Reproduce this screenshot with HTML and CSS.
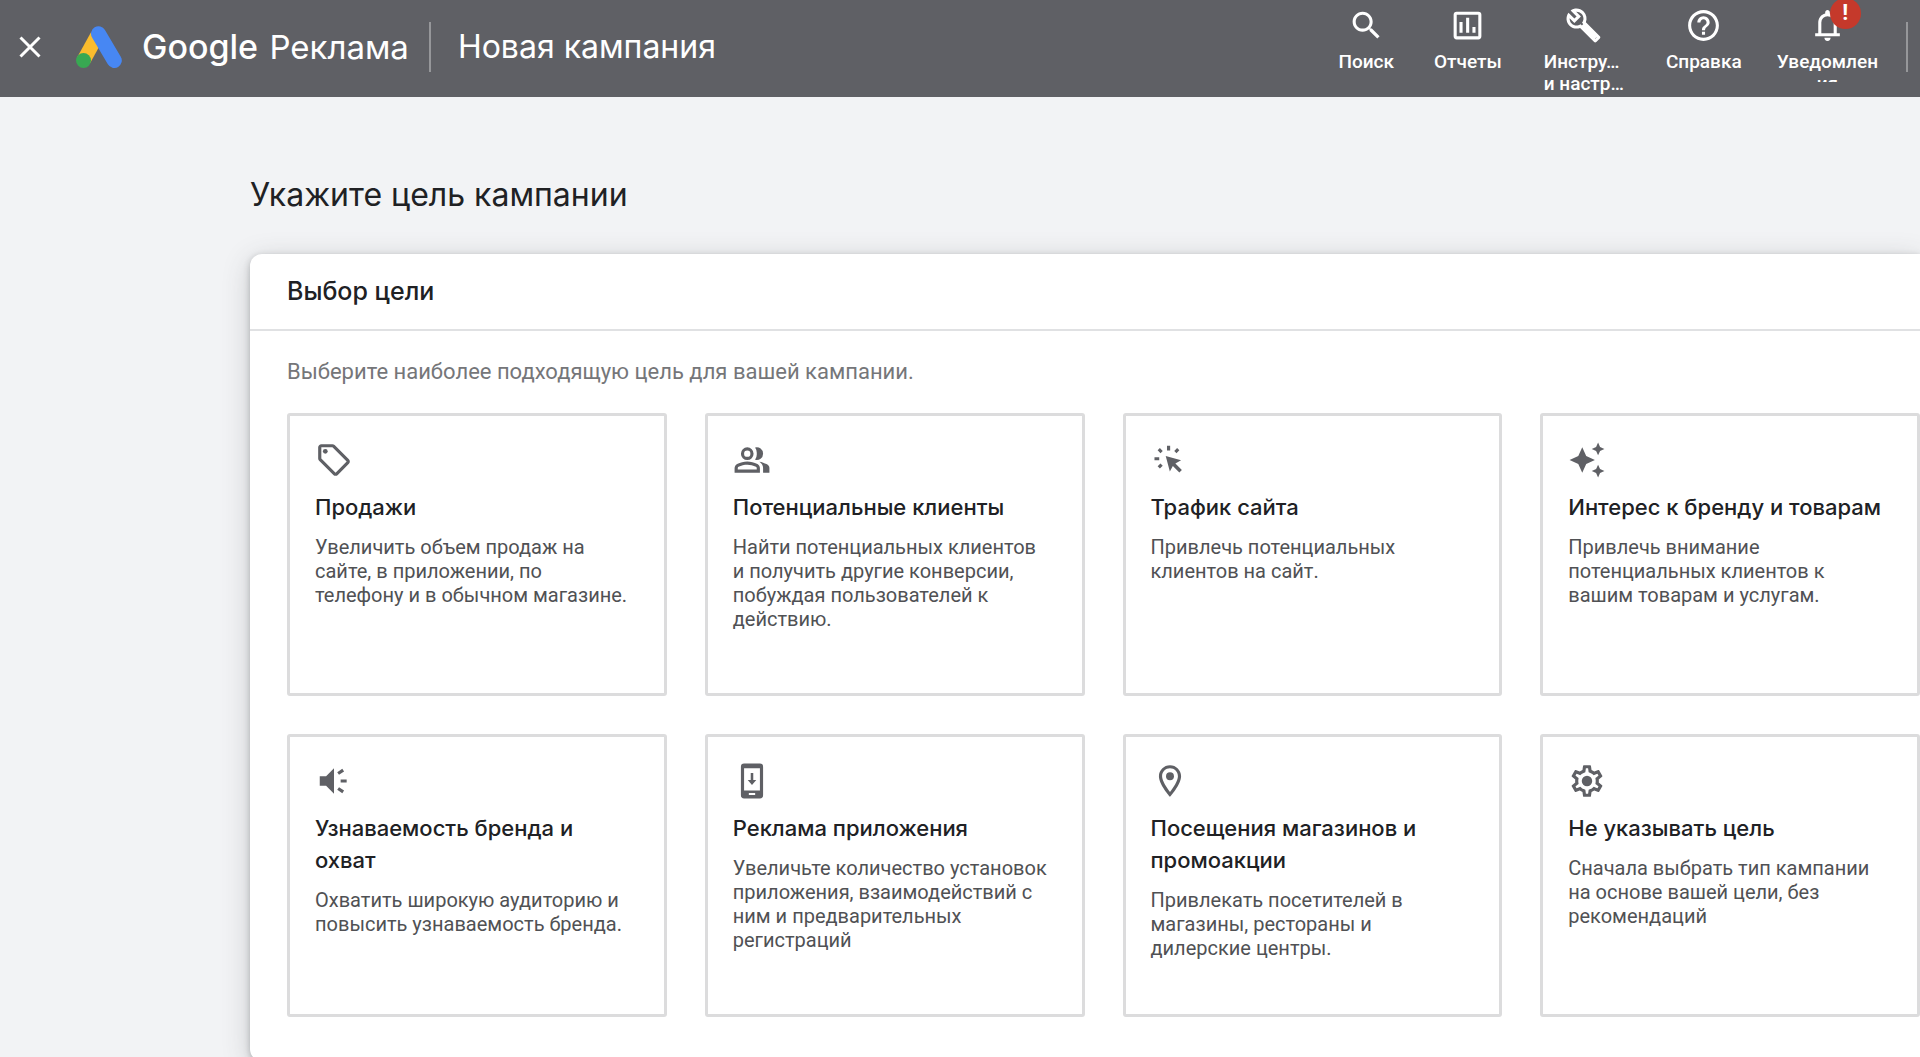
FILE: index.html
```html
<!DOCTYPE html>
<html lang="ru">
<head>
<meta charset="utf-8">
<meta name="viewport" content="width=device-width, initial-scale=1">
<title>Новая кампания – Google Реклама</title>
<link rel="stylesheet" href="styles.css">
</head>
<body>
<header class="topbar">
  <button class="close" type="button" aria-label="Закрыть">
    <svg viewBox="0 0 22 22" width="22" height="22"><path d="M1.5 1.5l19 19M20.5 1.5l-19 19" fill="none" stroke="currentColor" stroke-width="3"/></svg>
  </button>
  <a class="brand" href="#">
    <svg class="logo" viewBox="0 0 46 42" width="46" height="42" aria-hidden="true">
      <path d="M7.500 34.500L21 10" stroke="#fbbc2d" stroke-width="14"/>
      <path d="M22.500 7.800L38.300 34.500" stroke="#4787f3" stroke-width="15" stroke-linecap="round"/>
      <circle cx="7.500" cy="34.500" r="7.500" fill="#38a852"/>
    </svg>
    <span class="brand-name"><span class="brand-google">Google</span> Реклама</span>
  </a>
  <span class="divider"></span>
  <span class="page-name">Новая кампания</span>
  <nav class="tools">
    <button class="tool" type="button">
      <svg class="tool-icon" viewBox="0 0 24 24"><path d="M15.500 14h-.79l-.28-.27C15.410 12.590 16 11.110 16 9.500 16 5.910 13.090 3 9.500 3S3 5.910 3 9.500 5.910 16 9.500 16c1.610 0 3.090-.59 4.230-1.570l.27.28v.79l5 4.990L20.490 19l-4.990-5zm-6 0C7.010 14 5 11.990 5 9.500S7.010 5 9.500 5 14 7.010 14 9.500 11.990 14 9.500 14z"/></svg>
      <span class="tool-label">Поиск</span>
    </button>
    <button class="tool" type="button">
      <svg class="tool-icon" viewBox="0 0 24 24"><path fill-rule="evenodd" d="M5 3h14a2 2 0 0 1 2 2v14a2 2 0 0 1-2 2H5a2 2 0 0 1-2-2V5a2 2 0 0 1 2-2zm0 2v14h14V5z"/><path d="M6.800 9.700h2v7h-2zM11.100 7h2v9.700h-2zM15.200 13h2v3.700h-2z"/></svg>
      <span class="tool-label">Отчеты</span>
    </button>
    <button class="tool tool-wide" type="button">
      <svg class="tool-icon" viewBox="0 0 24 24"><path d="M22.610 18.990l-9.080-9.080c.93-2.340.45-5.100-1.440-7C9.790.61 6.210.4 3.660 2.260L7.500 6.110 6.080 7.520 2.250 3.690C.39 6.230.6 9.820 2.900 12.110c1.860 1.860 4.570 2.350 6.890 1.480l9.110 9.110c.39.39 1.020.39 1.410 0l2.300-2.300c.4-.38.4-1.010 0-1.410zm-3 1.600l-9.460-9.460c-.61.45-1.290.72-2 .82-1.360.2-2.790-.21-3.830-1.250C3.370 9.760 2.930 8.500 3 7.260l3.090 3.090 4.240-4.240-3.090-3.090c1.240-.07 2.490.37 3.440 1.310 1.080 1.080 1.490 2.570 1.240 3.960-.12.71-.42 1.370-.88 1.960l9.450 9.450-.88.89z"/><path d="M11.500 11.500L20 20" stroke="currentColor" stroke-width="3"/></svg>
      <span class="tool-label tool-label-start">Инстру…<br>и настр…</span>
    </button>
    <button class="tool" type="button">
      <svg class="tool-icon" viewBox="0 0 24 24"><path d="M11 18h2v-2h-2v2zm1-16C6.480 2 2 6.480 2 12s4.480 10 10 10 10-4.480 10-10S17.520 2 12 2zm0 18c-4.410 0-8-3.590-8-8s3.590-8 8-8 8 3.590 8 8-3.590 8-8 8zm0-14c-2.210 0-4 1.790-4 4h2c0-1.100.9-2 2-2s2 .9 2 2c0 2-3 1.750-3 5h2c0-2.250 3-2.500 3-5 0-2.210-1.790-4-4-4z"/></svg>
      <span class="tool-label">Справка</span>
    </button>
    <button class="tool tool-alerts" type="button">
      <span class="bell">
        <svg class="tool-icon" viewBox="0 0 24 24"><path fill-rule="evenodd" d="M4 19v-2h2v-7c0-1.380.42-2.610 1.250-3.690S9.170 4.530 10.500 4.200v-.7c0-.42.15-.77.44-1.060S11.580 2 12 2s.77.15 1.060.44.44.65.44 1.060v.7c1.330.33 2.420 1.030 3.250 2.110S18 8.620 18 10v7h2v2zm8 3a2 2 0 0 1-2-2h4a2 2 0 0 1-2 2zM8 17h8v-7a4 4 0 0 0-8 0z"/></svg>
        <span class="badge">!</span>
      </span>
      <span class="tool-label tool-label-clip">Уведомлен<br>ия</span>
    </button>
  </nav>
  <span class="divider"></span>
</header>

<main class="content">
  <h1 class="title">Укажите цель кампании</h1>
  <section class="panel">
    <h2 class="panel-title">Выбор цели</h2>
    <div class="panel-body">
      <p class="hint">Выберите наиболее подходящую цель для вашей кампании.</p>
      <div class="goals">
        <button class="goal" type="button">
          <svg class="goal-icon" viewBox="0 0 24 24"><path d="M21.410 11.580l-9-9C12.050 2.220 11.550 2 11 2H4c-1.100 0-2 .9-2 2v7c0 .55.22 1.050.59 1.420l9 9c.36.36.86.58 1.410.58s1.050-.22 1.410-.59l7-7c.37-.36.59-.86.59-1.410s-.23-1.060-.59-1.420zM13 20.010L4 11V4h7v-.01l9 9-7 7.020z"/><circle cx="6.500" cy="6.500" r="1.500"/></svg>
          <span class="goal-name">Продажи</span>
          <span class="goal-text">Увеличить объем продаж на сайте, в приложении, по телефону и в обычном магазине.</span>
        </button>
        <button class="goal" type="button">
          <svg class="goal-icon" viewBox="0 0 24 24"><path fill-rule="evenodd" d="M1 20v-2.800c0-.57.15-1.090.44-1.560A2.900 2.900 0 0 1 2.600 14.550a14.760 14.760 0 0 1 3.150-1.160A13.760 13.760 0 0 1 9 13c1.100 0 2.180.13 3.250.39 1.070.26 2.120.64 3.150 1.160.48.25.87.61 1.160 1.090.29.47.44.99.44 1.560V20zm2-2h12v-.8c0-.4-.2-.7-.5-.9A12 12 0 0 0 11.800 15.300 11.600 11.600 0 0 0 9 15c-.93 0-1.870.1-2.800.3-1 .3-1.800.5-2.700 1-.3.2-.5.5-.5.9zM19 20v-3c0-.73-.2-1.440-.61-2.110A5.700 5.700 0 0 0 16.650 13.150c.85.1 1.650.27 2.400.51.75.24 1.450.54 2.100.89.6.33 1.060.7 1.370 1.110.32.41.48.86.48 1.340V20zM9 12a4 4 0 1 1 0-8 4 4 0 0 1 0 8zm0-2a2 2 0 1 0 0-4 2 2 0 0 0 0 4zM19 8a4 4 0 0 1-5.050 3.880A6 6 0 0 0 15 8a6 6 0 0 0-1.050-3.880A4 4 0 0 1 19 8z"/></svg>
          <span class="goal-name">Потенциальные клиенты</span>
          <span class="goal-text">Найти потенциальных клиентов и получить другие конверсии, побуждая пользователей к действию.</span>
        </button>
        <button class="goal" type="button">
          <svg class="goal-icon" viewBox="0 0 24 24"><path d="M9.300 9.400l9.700 2.700-3.600 2.100 4.100 4.100-1.600 1.600-4.100-4.100-1.900 3.400z"/><path d="M11.100 3v3M4.900 5.200l1.800 1.800M17.200 5.200l-1.800 1.800M2.200 11.200h3M4.900 16.700l1.800-1.800" fill="none" stroke="currentColor" stroke-width="2"/></svg>
          <span class="goal-name">Трафик сайта</span>
          <span class="goal-text">Привлечь потенциальных клиентов на сайт.</span>
        </button>
        <button class="goal" type="button">
          <svg class="goal-icon" viewBox="0 0 24 24"><path d="M19 9l1.250-2.750L23 5l-2.750-1.250L19 1l-1.250 2.750L15 5l2.750 1.250L19 9zm-7.500.5L9 4 6.500 9.500 1 12l5.500 2.500L9 20l2.500-5.500L17 12l-5.500-2.500zM19 15l-1.250 2.750L15 19l2.750 1.250L19 23l1.250-2.750L23 19l-2.750-1.250L19 15z"/></svg>
          <span class="goal-name">Интерес к бренду и товарам</span>
          <span class="goal-text">Привлечь внимание потенциальных клиентов к вашим товарам и услугам.</span>
        </button>
        <button class="goal" type="button">
          <svg class="goal-icon" viewBox="0 0 24 24"><path d="M3 9v6h4l5 5V4L7 9z"/><path d="M14.600 7.300l3.200-2.200M16.200 12H20M14.600 16.700l3.200 2.200" fill="none" stroke="currentColor" stroke-width="2"/></svg>
          <span class="goal-name">Узнаваемость бренда и охват</span>
          <span class="goal-text">Охватить широкую аудиторию и повысить узнаваемость бренда.</span>
        </button>
        <button class="goal" type="button">
          <svg class="goal-icon" viewBox="0 0 24 24"><path fill-rule="evenodd" d="M7 1h10a2 2 0 0 1 2 2v18a2 2 0 0 1-2 2H7a2 2 0 0 1-2-2V3a2 2 0 0 1 2-2zm0 3v14h10V4zm3 15.500v1.300h4v-1.300z"/><path d="M11.200 7h1.600v4.400h1.900L12 14.600l-2.700-3.200h1.900z"/></svg>
          <span class="goal-name">Реклама приложения</span>
          <span class="goal-text">Увеличьте количество установок приложения, взаимодействий с ним и предварительных регистраций</span>
        </button>
        <button class="goal" type="button">
          <svg class="goal-icon" viewBox="0 0 24 24"><path d="M12 2C8.130 2 5 5.130 5 9c0 5.250 7 13 7 13s7-7.750 7-13c0-3.870-3.130-7-7-7zM7 9c0-2.760 2.240-5 5-5s5 2.240 5 5c0 2.880-2.880 7.190-5 9.880C9.920 16.210 7 11.850 7 9z"/><circle cx="12" cy="9" r="2.500"/></svg>
          <span class="goal-name">Посещения магазинов и промоакции</span>
          <span class="goal-text">Привлекать посетителей в магазины, рестораны и дилерские центры.</span>
        </button>
        <button class="goal" type="button">
          <svg class="goal-icon" viewBox="0 0 24 24"><path d="M19.430 12.980c.04-.32.07-.64.07-.98 0-.34-.03-.66-.07-.98l2.110-1.650c.19-.15.24-.42.12-.64l-2-3.460c-.09-.16-.26-.25-.44-.25-.06 0-.12.01-.17.03l-2.490 1c-.52-.4-1.080-.73-1.690-.98l-.38-2.650C14.460 2.180 14.250 2 14 2h-4c-.25 0-.46.18-.49.42l-.38 2.650c-.61.25-1.170.59-1.690.98l-2.490-1c-.06-.02-.12-.03-.18-.03-.17 0-.34.09-.43.25l-2 3.460c-.13.22-.07.49.12.64l2.110 1.650c-.04.32-.07.65-.07.98 0 .33.03.66.07.98l-2.110 1.650c-.19.15-.24.42-.12.64l2 3.460c.09.16.26.25.44.25.06 0 .12-.01.17-.03l2.490-1c.52.4 1.080.73 1.690.98l.38 2.650c.03.24.24.42.49.42h4c.25 0 .46-.18.49-.42l.38-2.650c.61-.25 1.170-.59 1.690-.98l2.490 1c.06.02.12.03.18.03.17 0 .34-.09.43-.25l2-3.460c.12-.22.07-.49-.12-.64l-2.110-1.650zm-1.980-1.710c.04.31.05.52.05.73 0 .21-.02.43-.05.73l-.14 1.130.89.7 1.080.84-.7 1.210-1.270-.51-1.040-.42-.9.68c-.43.32-.84.56-1.250.73l-1.060.43-.16 1.130-.2 1.350h-1.400l-.19-1.350-.16-1.130-1.060-.43c-.43-.18-.83-.41-1.230-.71l-.91-.7-1.060.43-1.270.51-.7-1.210 1.080-.84.89-.7-.14-1.130c-.03-.31-.05-.54-.05-.74s.02-.43.05-.73l.14-1.130-.89-.7-1.080-.84.7-1.210 1.270.51 1.040.42.9-.68c.43-.32.84-.56 1.250-.73l1.060-.43.16-1.130.2-1.350h1.390l.19 1.350.16 1.130 1.060.43c.43.18.83.41 1.230.71l.91.7 1.060-.43 1.270-.51.7 1.210-1.070.85-.89.7.14 1.130z"/><circle cx="12" cy="12" r="3.300"/></svg>
          <span class="goal-name">Не указывать цель</span>
          <span class="goal-text">Сначала выбрать тип кампании на основе вашей цели, без рекомендаций</span>
        </button>
      </div>
    </div>
  </section>
</main>
</body>
</html>
```
FILE: styles.css
```css
:root {
  --display: Inter, "Open Sans", sans-serif;
  --text: Roboto, "Liberation Sans", sans-serif;
  --grey: #5f6065;
  --ink: #202124;
}

* { box-sizing: border-box; }

body {
  margin: 0;
  background: #f2f3f5;
  color: var(--ink);
  font-family: var(--text);
}

button {
  margin: 0;
  border: 0;
  background: none;
  color: inherit;
  font: inherit;
  cursor: pointer;
}

svg { flex: none; fill: currentColor; }

/* Top bar */
.topbar {
  display: flex;
  align-items: center;
  height: 97px;
  padding: 0 12px 3px 19px;
  background: var(--grey);
  color: #fff;
}

.close { display: flex; padding: 0; }

.brand {
  display: flex;
  align-items: center;
  gap: 20px;
  margin: 0 20px 0 35px;
  color: inherit;
  text-decoration: none;
}

.logo { fill: none; }

.brand-name,
.page-name {
  font-family: var(--display);
  font-size: 32px;
  line-height: 40px;
  white-space: nowrap;
}

.brand-name { font-size: 33px; }

.brand-google { margin-right: 2px; font-size: 34px; font-weight: 500; }

.page-name { margin-left: 27px; }

.divider {
  flex: none;
  width: 2px;
  height: 50px;
  background: #96979a;
}

.tools {
  display: flex;
  align-self: flex-start;
  margin-left: auto;
  padding-right: 13px;
}

.tool {
  display: flex;
  flex-direction: column;
  align-items: center;
  gap: 7px;
  padding: 7px 20px 0;
}

.tool-wide { padding-inline: 22px; }
.tool-alerts { padding-inline: 15px; }

.tool-icon { display: block; width: 37px; height: 37px; }

.tool-label {
  font-size: 19px;
  font-weight: 500;
  line-height: 22px;
  white-space: nowrap;
}

.tool-label-start { text-align: left; }

.tool-label-clip { height: 31px; overflow: hidden; }

.bell { position: relative; }

.badge {
  position: absolute;
  left: 21px;
  bottom: 15px;
  width: 31px;
  height: 31px;
  border-radius: 50%;
  background: #c5392b;
  font-size: 22px;
  font-weight: 700;
  line-height: 30px;
  text-align: center;
}

/* Page */
.content { padding: 78px 0 0 250px; }

.title {
  margin: 0 0 39px;
  font-family: var(--display);
  font-size: 32px;
  font-weight: 400;
  line-height: 40px;
}

.panel {
  border-radius: 12px 0 0 12px;
  background: #fff;
  box-shadow: 0 6px 28px rgba(60, 64, 67, .22), 0 2px 6px rgba(60, 64, 67, .3);
}

.panel-title {
  margin: 0;
  padding: 22px 37px;
  border-bottom: 2px solid #e0e1e3;
  font-family: var(--display);
  font-size: 25px;
  font-weight: 500;
  line-height: 31px;
}

.panel-body { padding: 28px 0 44px 37px; }

.hint {
  margin: 0 0 28px;
  color: #757679;
  font-size: 22px;
  line-height: 26px;
}

.goals {
  display: grid;
  grid-template-columns: repeat(4, minmax(0, 1fr));
  gap: 38px;
}

.goal {
  display: flex;
  flex-direction: column;
  align-items: flex-start;
  justify-content: flex-start;
  gap: 12px;
  min-height: 283px;
  padding: 25px 31px 25px 25px;
  border: 3px solid #dcdcdd;
  border-radius: 3px;
  text-align: left;
}

.goal-icon { width: 38px; height: 38px; color: var(--grey); }

.goal-name {
  font-family: var(--display);
  font-size: 22px;
  font-weight: 500;
  line-height: 32px;
}

.goal-text {
  color: #505154;
  font-size: 20px;
  line-height: 24px;
}
```
